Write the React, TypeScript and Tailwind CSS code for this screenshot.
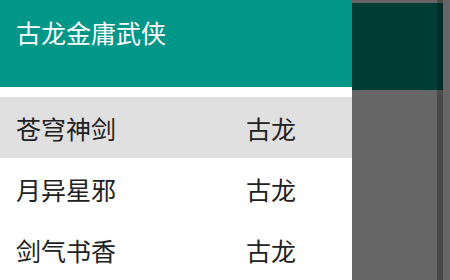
import React from "react";

const books = [
  { title: "苍穹神剑", author: "古龙", selected: true },
  { title: "月异星邪", author: "古龙", selected: false },
  { title: "剑气书香", author: "古龙", selected: false },
];

const font = { fontFamily: '"Noto Sans CJK SC", "Noto Sans", sans-serif' };

export default function App() {
  return (
    <div
      className="relative w-[450px] h-[280px] overflow-hidden bg-white"
      style={font}
    >
      {/* App behind the drawer */}
      <div className="h-full flex flex-col">
        <div className="h-[3px] bg-white" />
        <div className="h-[87px] w-[443px] bg-[#009688]" />
      </div>
      {/* scrollbar-like strip */}
      <div className="absolute top-0 bottom-0 left-[437px] w-[6px] bg-black/[0.27]" />

      {/* Scrim */}
      <div className="absolute inset-0 bg-black/60" />

      {/* Drawer */}
      <aside className="absolute left-0 top-0 h-full w-[352px] bg-white flex flex-col">
        <div className="h-[88px] bg-[#009688] px-4 pt-[20px]">
          <h1 className="text-[25px] leading-[25px] text-white">古龙金庸武侠</h1>
        </div>
        <ul className="mt-[10px]">
          {books.map((b) => (
            <li
              key={b.title}
              className={`h-[61px] grid grid-cols-[230px_1fr] items-center px-4 pt-[2px] text-[25px] leading-[25px] text-[#212121] ${
                b.selected ? "bg-[#e0e0e0]" : "bg-white"
              }`}
            >
              <span>{b.title}</span>
              <span>{b.author}</span>
            </li>
          ))}
        </ul>
      </aside>
    </div>
  );
}
